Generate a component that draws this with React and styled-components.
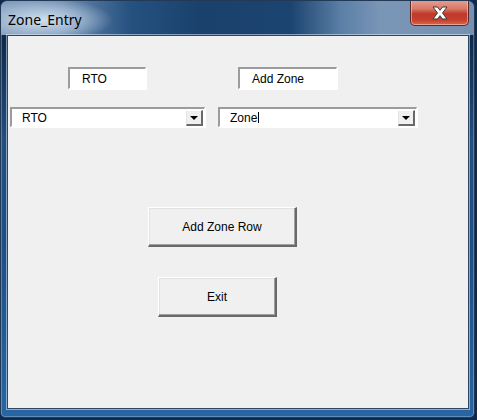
import React from "react";
import styled, { createGlobalStyle } from "styled-components";

const Global = createGlobalStyle`
  html, body { margin: 0; padding: 0; }
  body {
    width: 477px;
    height: 420px;
    overflow: hidden;
    background: #0e2b4d;
    font-family: "Liberation Sans", Arial, sans-serif;
  }
`;

const Frame = styled.div`
  box-sizing: border-box;
  width: 475px;
  height: 418px;
  display: flex;
  flex-direction: column;
  border: 1px solid #233a57;
  border-radius: 7px 7px 5px 5px;
  overflow: hidden;
  background:
    linear-gradient(180deg, rgba(140,165,195,0) 0px, rgba(140,165,195,0) 40px, #234e7e 140px, #1f4f85 250px, #2866a3 418px);
  box-shadow: inset 0 0 0 1px rgba(200,220,240,0.35);
`;

const TitleBar = styled.div`
  height: 34px;
  display: flex;
  align-items: flex-start;
  background:
    radial-gradient(ellipse 70px 22px at 42px 19px, rgba(215,228,240,0.95) 0%, rgba(190,208,228,0.6) 55%, rgba(150,175,200,0) 100%),
    linear-gradient(90deg, #7f9bbb 0px, #6b8bb0 60px, #25517f 130px, #1a416c 200px, #1c4470 290px, #5b7fa6 340px, #7a96b6 380px, #7690b0 477px);
  flex-shrink: 0;
`;

const Title = styled.div`
  padding: 9px 0 0 7px;
  font-family: "Noto Sans", "Open Sans", sans-serif;
  font-size: 14px;
  line-height: 20px;
  color: #000;
`;

const CloseButton = styled.div`
  margin-left: auto;
  margin-right: 5px;
  margin-top: -1px;
  width: 59px;
  height: 26px;
  box-sizing: border-box;
  border: 1px solid #5a2a2a;
  border-top: none;
  border-radius: 0 0 5px 5px;
  background: linear-gradient(180deg, #e4a093 0%, #d87a68 35%, #c0392a 55%, #c4402f 80%, #d8684f 100%);
  box-shadow: inset 0 0 0 1px rgba(255,210,200,0.55);
  display: flex;
  align-items: center;
  justify-content: center;
`;

const ClientWrap = styled.div`
  flex: 1;
  display: flex;
  padding: 0 5px 8px 6px;
`;

const Client = styled.div`
  flex: 1;
  background: #f0f0f0;
  border: 1px solid #2f4560;
  box-shadow: 0 0 0 1px rgba(220,235,250,0.55);
  display: flex;
  flex-direction: column;
  align-items: flex-start;
`;

const Row = styled.div`
  display: flex;
  align-items: flex-start;
  gap: ${(p) => p.$gap}px;
  margin-top: ${(p) => p.$top}px;
  margin-left: ${(p) => p.$left}px;
`;

const Sunken = styled.div`
  box-sizing: border-box;
  background: #fff;
  border-style: solid;
  border-width: 2px 1px 1px 2px;
  border-color: #9c9c9c #ffffff #ffffff #9c9c9c;
  box-shadow: 1px 1px 0 #ffffff;
  font-size: 12px;
  color: #000;
  display: flex;
  align-items: center;
`;

const Label = styled(Sunken)`
  width: ${(p) => p.$w}px;
  height: 22px;
  padding-left: 12px;
`;

const Combo = styled(Sunken)`
  width: ${(p) => p.$w}px;
  height: 20px;
  padding-left: 10px;
  padding-right: 1px;
`;

const ComboText = styled.span`
  flex: 1;
  display: flex;
  align-items: center;
`;

const Caret = styled.span`
  display: inline-block;
  width: 1px;
  height: 11px;
  background: #000;
  margin-left: 1px;
`;

const DropButton = styled.div`
  box-sizing: border-box;
  width: 17px;
  height: 16px;
  background: #f0f0f0;
  border-style: solid;
  border-width: 1px 2px 2px 1px;
  border-color: #ffffff #696969 #696969 #e3e3e3;
  display: flex;
  align-items: center;
  justify-content: center;
`;

const Arrow = styled.span`
  width: 0;
  height: 0;
  border-left: 4px solid transparent;
  border-right: 4px solid transparent;
  border-top: 4px solid #000;
  margin-top: 1px;
`;

const Button = styled.div`
  box-sizing: border-box;
  width: ${(p) => p.$w}px;
  height: 40px;
  margin-top: ${(p) => p.$top}px;
  margin-left: ${(p) => p.$left}px;
  background: #f0f0f0;
  border-style: solid;
  border-width: 1px 2px 2px 1px;
  border-color: #ffffff #696969 #696969 #ffffff;
  box-shadow: inset -1px -1px 0 #a0a0a0, inset 1px 1px 0 #e3e3e3;
  font-size: 12px;
  color: #000;
  display: flex;
  align-items: center;
  justify-content: center;
`;

export default function App() {
  return (
    <>
      <Global />
      <Frame>
        <TitleBar>
          <Title>Zone_Entry</Title>
          <CloseButton>
            <svg width="18" height="14" viewBox="0 0 18 14">
              <path
                d="M2 1 H6.5 L9 4.3 L11.5 1 H16 L11.5 7 L16 13 H11.5 L9 9.7 L6.5 13 H2 L6.5 7 Z"
                fill="#ffffff"
                stroke="#3b3b3b"
                strokeWidth="1"
                strokeLinejoin="round"
              />
            </svg>
          </CloseButton>
        </TitleBar>
        <ClientWrap>
          <Client>
            <Row $top={31} $left={60} $gap={92}>
              <Label $w={78}>RTO</Label>
              <Label $w={99}>Add Zone</Label>
            </Row>
            <Row $top={18} $left={2} $gap={13}>
              <Combo $w={195}>
                <ComboText>RTO</ComboText>
                <DropButton><Arrow /></DropButton>
              </Combo>
              <Combo $w={199}>
                <ComboText>Zone<Caret /></ComboText>
                <DropButton><Arrow /></DropButton>
              </Combo>
            </Row>
            <Button $w={149} $top={80} $left={140}>Add Zone Row</Button>
            <Button $w={119} $top={30} $left={150}>Exit</Button>
          </Client>
        </ClientWrap>
      </Frame>
    </>
  );
}
